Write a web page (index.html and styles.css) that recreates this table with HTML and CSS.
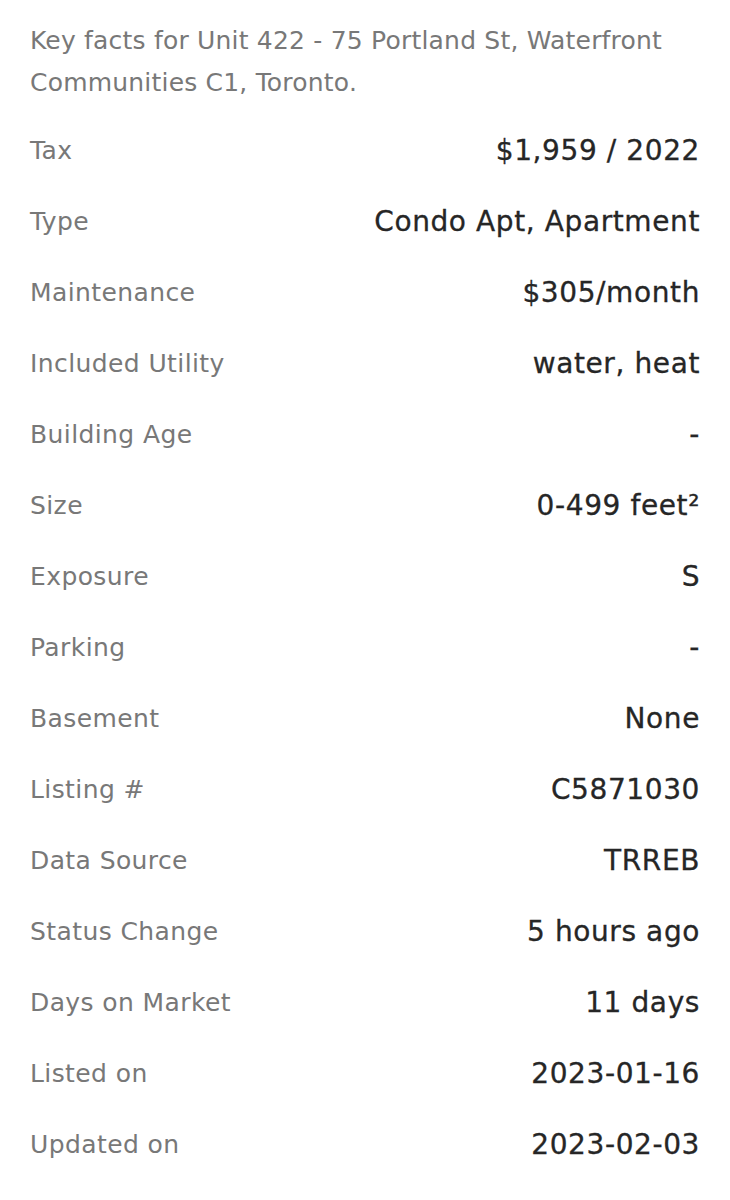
FILE: index.html
```html
<!DOCTYPE html>
<html lang="en">
<head>
  <meta charset="UTF-8" />
  <meta name="viewport" content="width=device-width, initial-scale=1.0" />
  <title>Key facts - Unit 422 - 75 Portland St</title>
  <link rel="stylesheet" href="styles.css">
</head>
<body>
  <section class="facts">
    <p class="intro">Key facts for Unit 422 - 75 Portland St, Waterfront Communities C1, Toronto.</p>
    <dl class="fact-list">
      <div class="fact"><dt>Tax</dt><dd>$1,959 / 2022</dd></div>
      <div class="fact"><dt>Type</dt><dd>Condo Apt, Apartment</dd></div>
      <div class="fact"><dt>Maintenance</dt><dd>$305/month</dd></div>
      <div class="fact"><dt>Included Utility</dt><dd>water, heat</dd></div>
      <div class="fact"><dt>Building Age</dt><dd>-</dd></div>
      <div class="fact"><dt>Size</dt><dd>0-499 feet²</dd></div>
      <div class="fact"><dt>Exposure</dt><dd>S</dd></div>
      <div class="fact"><dt>Parking</dt><dd>-</dd></div>
      <div class="fact"><dt>Basement</dt><dd>None</dd></div>
      <div class="fact"><dt>Listing #</dt><dd>C5871030</dd></div>
      <div class="fact"><dt>Data Source</dt><dd>TRREB</dd></div>
      <div class="fact"><dt>Status Change</dt><dd>5 hours ago</dd></div>
      <div class="fact"><dt>Days on Market</dt><dd>11 days</dd></div>
      <div class="fact"><dt>Listed on</dt><dd>2023-01-16</dd></div>
      <div class="fact"><dt>Updated on</dt><dd>2023-02-03</dd></div>
    </dl>
  </section>
</body>
</html>
```

FILE: styles.css
```css
* { box-sizing: border-box; margin: 0; padding: 0; }
body { background: #fff; color: #222; font-family: 'DejaVu Sans', 'Liberation Sans', sans-serif; }
.facts { padding: 20px 30px 20px 30px; }
.intro { font-size: 25px; line-height: 42px; letter-spacing: 0.2px; color: #787878; margin-bottom: 11px; }
.fact-list { display: flex; flex-direction: column; }
.fact { display: flex; justify-content: space-between; align-items: center; height: 71px; font-size: 25px; }
.fact dt { color: #787878; letter-spacing: 0.4px; }
.fact dd { color: #262626; font-size: 28px; letter-spacing: 0.6px; -webkit-text-stroke: 0.3px #262626; }
```
